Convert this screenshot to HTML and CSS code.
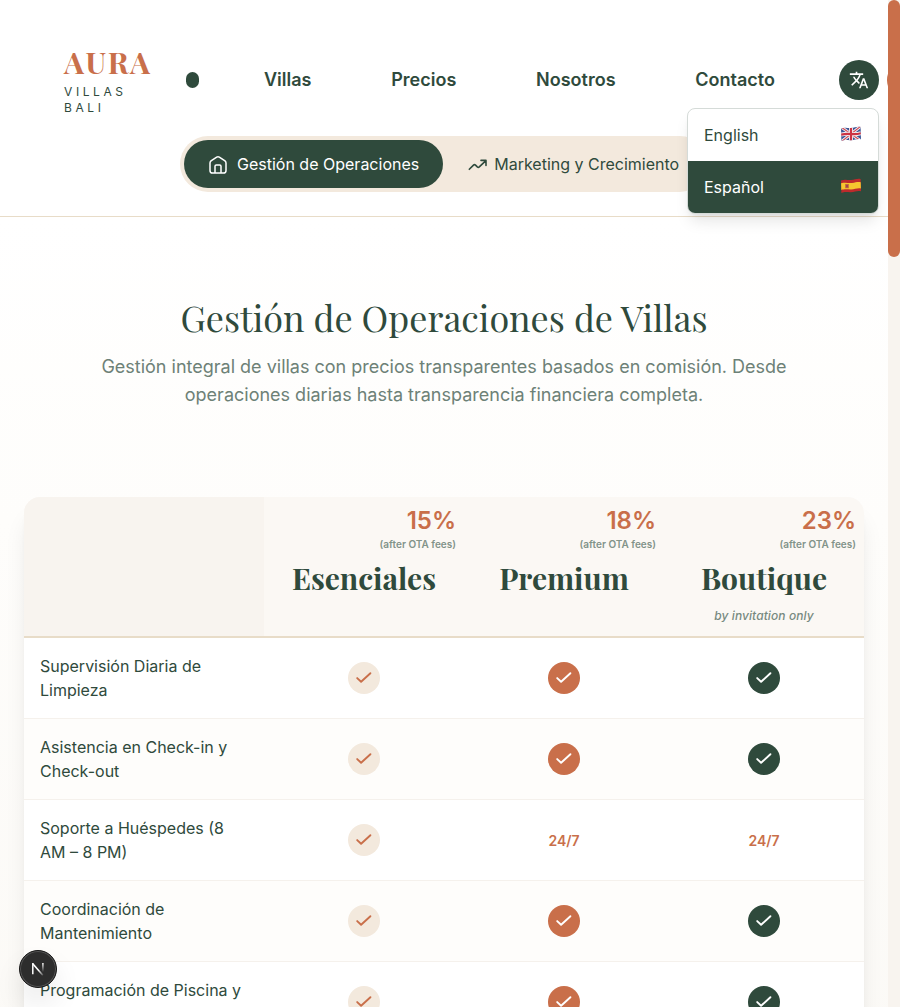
FILE: index.html
```html
<!DOCTYPE html>
<html lang="es">
<head>
<meta charset="utf-8">
<meta name="viewport" content="width=device-width, initial-scale=1">
<title>Aura Villas Bali</title>
<link rel="stylesheet" href="styles.css">
</head>
<body>
<svg class="defs" width="0" height="0" aria-hidden="true">
  <symbol id="check" viewBox="0 0 20 20"><path d="M3.2 10.1 7.1 13.8 16.4 5.2" fill="none" stroke="currentColor" stroke-width="1.9" stroke-linecap="round" stroke-linejoin="round"/></symbol>
</svg>
<div class="page">
  <header class="header">
    <div class="topbar">
      <a class="logo"><span class="logo-name">AURA</span><span class="logo-sub">VILLAS<br>BALI</span></a>
      <span class="dot"></span>
      <nav class="nav"><a>Villas</a><a>Precios</a><a>Nosotros</a><a>Contacto</a></nav>
      <div class="lang">
        <button class="lang-btn" aria-label="Idioma"><svg width="20" height="20" viewBox="0 0 24 24" fill="currentColor"><path d="m12.87 15.07-2.54-2.51.03-.03A17.5 17.5 0 0 0 14.07 6H17V4h-7V2H8v2H1v2h11.17C11.5 7.92 10.44 9.75 9 11.35 8.07 10.32 7.3 9.19 6.69 8h-2c.73 1.63 1.73 3.17 2.98 4.56l-5.09 5.02L4 19l5-5 3.11 3.11zM18.5 10h-2L12 22h2l1.12-3h4.75L21 22h2zm-2.62 7 1.62-4.33L19.12 17z"/></svg></button>
        <div class="menu">
          <div class="option"><span>English</span>
            <svg class="flag" width="20" height="16" viewBox="0 0 20 16"><clipPath id="uk"><path d="M0 2.4C4 .9 7 2.2 10 2 14 1.8 16 .3 19.6 1L20 13.3C16 12.5 14 14 10 14.2 6 14.3 4 13.3.4 15z"/></clipPath><g clip-path="url(#uk)"><path fill="#3a5596" d="M0 0h20v16H0z"/><path d="M0 1 20 15M20 0 0 16" stroke="#f1eff2" stroke-width="3"/><path d="M0 1 20 15M20 0 0 16" stroke="#d04a56" stroke-width="1.1"/><path d="M10 0v16M0 8.6Q5 7.4 10 8T20 7.2" fill="none" stroke="#f1eff2" stroke-width="4"/><path d="M10 0v16M0 8.6Q5 7.4 10 8T20 7.2" fill="none" stroke="#cc3343" stroke-width="2.2"/></g></svg>
          </div>
          <div class="option selected"><span>Español</span>
            <svg class="flag" width="20" height="16" viewBox="0 0 20 16"><clipPath id="es"><path d="M0 2.4C4 .9 7 2.2 10 2 14 1.8 16 .3 19.6 1L20 13.3C16 12.5 14 14 10 14.2 6 14.3 4 13.3.4 15z"/></clipPath><g clip-path="url(#es)"><path fill="#bd2a2c" d="M0 0h20v16H0z"/><path fill="#f6c62f" d="M0 5.2C5 4 7 5.3 11 5 15 4.6 16 3.7 20 4.3v6.1c-4-.6-6 .8-10 1-4 0-6-.6-10 .5z"/><path fill="#c77a39" d="M4 6h4v4.3H4z"/><path fill="#a6424f" d="M5 6.7h2v2.7H5z"/></g></svg>
          </div>
        </div>
      </div>
      <span class="book"></span>
    </div>
    <div class="tabs">
      <a class="tab active"><svg width="20" height="20" viewBox="0 0 20 20" fill="none" stroke="currentColor" stroke-width="1.5" stroke-linejoin="round" stroke-linecap="round"><path d="M2 7.9Q2 6.7 3 5.9L8.7 2.1Q10 1.2 11.3 2.1L17 5.9Q18 6.7 18 7.9V15.4Q18 18 15.4 18H4.6Q2 18 2 15.4zM7 17.8V11.3Q7 10 8.3 10H11.7Q13 10 13 11.3V17.8"/></svg><span>Gestión de Operaciones</span></a>
      <a class="tab trend"><svg width="20" height="20" viewBox="0 0 20 20" fill="none" stroke="currentColor" stroke-width="1.6" stroke-linejoin="round" stroke-linecap="round"><path d="m1.3 14.3 4.2-4.2q1-.9 2 0l1.8 1.8q1 .9 2 0l6.6-6.3M13 5.4h5v5"/></svg><span>Marketing y Crecimiento</span></a>
    </div>
  </header>
  <main>
    <section class="intro">
      <h1>Gestión de Operaciones de Villas</h1>
      <p>Gestión integral de villas con precios transparentes basados en comisión. Desde<br>operaciones diarias hasta transparencia financiera completa.</p>
    </section>
    <section class="plans">
      <div class="row head">
        <div></div>
        <div class="plan"><strong>15%</strong><small>(after OTA fees)</small><h2>Esenciales</h2></div>
        <div class="plan"><strong>18%</strong><small>(after OTA fees)</small><h2>Premium</h2></div>
        <div class="plan"><strong>23%</strong><small>(after OTA fees)</small><h2>Boutique</h2><em>by invitation only</em></div>
      </div>
      <div class="row"><div class="feature">Supervisión Diaria de<br>Limpieza</div><div><i class="mark sand"><svg><use href="#check"/></svg></i></div><div><i class="mark clay"><svg><use href="#check"/></svg></i></div><div><i class="mark pine"><svg><use href="#check"/></svg></i></div></div>
      <div class="row"><div class="feature">Asistencia en Check-in y<br>Check-out</div><div><i class="mark sand"><svg><use href="#check"/></svg></i></div><div><i class="mark clay"><svg><use href="#check"/></svg></i></div><div><i class="mark pine"><svg><use href="#check"/></svg></i></div></div>
      <div class="row"><div class="feature">Soporte a Huéspedes (8<br>AM – 8 PM)</div><div><i class="mark sand"><svg><use href="#check"/></svg></i></div><div><b>24/7</b></div><div><b>24/7</b></div></div>
      <div class="row"><div class="feature">Coordinación de<br>Mantenimiento</div><div><i class="mark sand"><svg><use href="#check"/></svg></i></div><div><i class="mark clay"><svg><use href="#check"/></svg></i></div><div><i class="mark pine"><svg><use href="#check"/></svg></i></div></div>
      <div class="row"><div class="feature">Programación de Piscina y<br>&nbsp;</div><div><i class="mark sand"><svg><use href="#check"/></svg></i></div><div><i class="mark clay"><svg><use href="#check"/></svg></i></div><div><i class="mark pine"><svg><use href="#check"/></svg></i></div></div>
    </section>
  </main>
</div>
<div class="scrollbar"><div class="thumb"></div></div>
<div class="badge"><svg width="16" height="16" viewBox="0 0 16 16" fill="none"><defs><linearGradient id="nd" x1="9" y1="9" x2="13" y2="14" gradientUnits="userSpaceOnUse"><stop stop-color="#fff"/><stop offset="1" stop-color="#fff" stop-opacity="0.2"/></linearGradient><linearGradient id="nv" x1="0" y1="2" x2="0" y2="11" gradientUnits="userSpaceOnUse"><stop stop-color="#fff"/><stop offset="1" stop-color="#fff" stop-opacity="0"/></linearGradient></defs><path d="M2.8 2.8 12.8 14.2" stroke="url(#nd)" stroke-width="1.6"/><path d="M2.8 13.2V2" stroke="#fff" stroke-width="1.5"/><path d="M12.9 2v9" stroke="url(#nv)" stroke-width="1.5"/></svg></div>
</body>
</html>
```
FILE: styles.css
```css
* { box-sizing: border-box; }
body { margin: 0; height: 1007px; overflow: hidden; display: flex; background: #fff; color: #2f4a3c; font-family: Inter, sans-serif; font-size: 16px; line-height: 24px; }
.defs { position: absolute; }
.page { width: 888px; height: 1007px; flex: none; overflow: hidden; background: linear-gradient(#fff 217px, #fefdfb 520px, #faf8f4 1300px); }
.header { height: 217px; padding-top: 48px; background: #fff; border-bottom: 1px solid #e8dcc8; }
.topbar { height: 64px; display: flex; align-items: center; padding-left: 64px; white-space: nowrap; }
.logo { width: 122px; flex: none; display: flex; flex-direction: column; height: 68px; align-self: flex-start; }
.logo-name { font: 700 30px/32px "Playfair Display", "Liberation Serif", serif; color: #c96f4a; letter-spacing: 1.5px; margin-top: -2px; }
.logo-sub { font-size: 12px; line-height: 16px; letter-spacing: 3.6px; margin-top: 6px; }
.dot { width: 13px; height: 16px; flex: none; border-radius: 7px; background: #2f4a3c; margin-right: 65px; }
.nav { width: 511px; flex: none; display: flex; justify-content: space-between; font-size: 18px; font-weight: 600; }
.lang { position: relative; flex: none; margin-left: 64px; }
.lang-btn { width: 40px; height: 40px; display: grid; place-items: center; border: 0; padding: 0; border-radius: 50%; background: #2f4a3c; color: #fff; }
.book { width: 80px; height: 40px; flex: none; margin-left: 8px; border-radius: 20px; background: #c96f4a; }
.menu { position: absolute; right: 0; top: 48px; width: 192px; z-index: 5; overflow: hidden; border: 1px solid #d5dbd8; border-radius: 8px; background: #fff; box-shadow: 0 10px 15px -3px #0000001a, 0 4px 6px -4px #0000001a; }
.option { height: 52px; padding: 0 17px 0 16px; display: flex; align-items: center; justify-content: space-between; }
.flag { margin-bottom: 2px; }
.selected { background: #2f4a3c; color: #fff; }
.tabs { width: 528px; height: 56px; margin: 24px 0 0 180px; padding: 4px; display: flex; border-radius: 28px; background: #f3e9dd; }
.tab { display: flex; align-items: center; gap: 9px; padding: 0 24px; border-radius: 24px; white-space: nowrap; }
.tab svg { margin-top: 2px; flex: none; }
.trend { padding-left: 25px; gap: 6px; }
.active { background: #2f4a3c; color: #fff; }
.intro { height: 280px; padding-top: 76px; text-align: center; }
h1 { margin: 0; font: 400 36px/48px "Playfair Display", "Liberation Serif", serif; white-space: nowrap; }
.intro p { margin: 12px 0 0; font-size: 18px; line-height: 28px; color: #6d8177; }
.plans { width: 840px; margin: 0 24px; border-radius: 16px; overflow: hidden; background: #fff; box-shadow: 0 20px 25px -5px #0000001a, 0 8px 10px -6px #0000001a; }
.row { display: grid; grid-template-columns: 240px repeat(3, 200px); height: 81px; border-bottom: 1px solid #f5f1ec; }
.row > div { display: flex; align-items: center; justify-content: center; }
.row:nth-child(odd) { background: #fefdfb; }
.row > .feature { justify-content: flex-start; padding-left: 16px; }
.row.head { height: 141px; background: #fbf8f4; border-bottom: 2px solid #e8dcc8; }
.head > div:first-child { background: #f8f4ef; }
.row > .plan { flex-direction: column; justify-content: flex-start; align-items: center; padding: 8px 8px 0; }
.plan strong { align-self: flex-end; font-size: 24px; font-weight: 600; line-height: 32px; color: #c96f4a; }
.plan small { align-self: flex-end; font-size: 10px; font-weight: 600; line-height: 14px; color: #829389; }
.plan h2 { margin: 7px 0 0; font: 700 30px/40px "Playfair Display", "Liberation Serif", serif; }
.plan em { margin-top: 10px; font-size: 12px; font-weight: 500; letter-spacing: 0.08px; line-height: 16px; color: #778a80; }
.mark { width: 32px; height: 32px; display: grid; place-items: center; border-radius: 50%; color: #fff; }
.mark svg { width: 20px; height: 20px; }
.sand { background: #f3e9dd; color: #c96f4a; }
.clay { background: #c96f4a; }
.pine { background: #2f4a3c; }
.row b { font-size: 14px; font-weight: 600; color: #c96f4a; padding-top: 2px; }
.scrollbar { width: 12px; height: 1007px; background: #f8f4ef; }
.thumb { height: 257px; border-radius: 6px; background: #c96f4a; }
.badge { position: fixed; left: 19px; bottom: 19px; width: 38px; height: 38px; display: grid; place-items: center; border-radius: 50%; background: #2d2d2d; border: 1px solid #171717; box-shadow: inset 0 0 0 1px #555, 0 16px 32px -8px #0000003d; }
```
